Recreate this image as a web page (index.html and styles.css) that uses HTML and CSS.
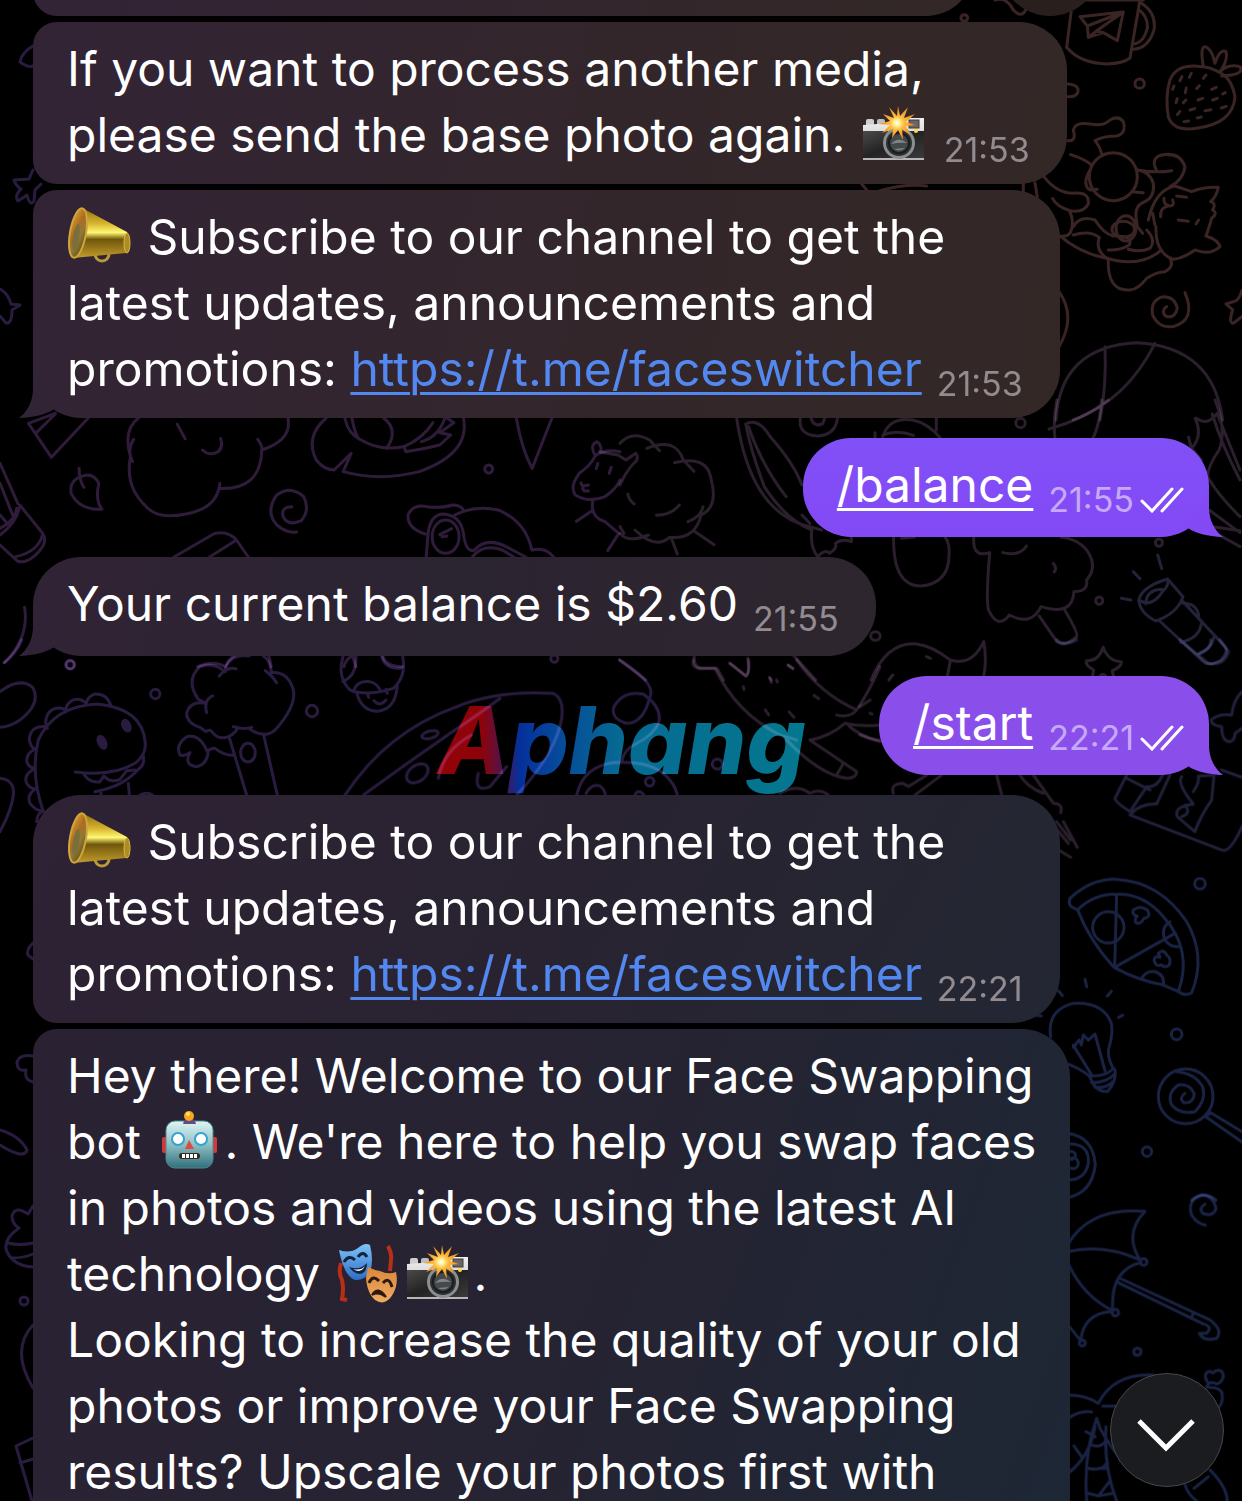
FILE: index.html
```html
<!DOCTYPE html>
<html lang="en">
<head>
<meta charset="utf-8">
<meta name="viewport" content="width=device-width, initial-scale=1">
<title>Face Switcher</title>
<link rel="stylesheet" href="styles.css">
</head>
<body>

<!-- shared shapes -->
<svg class="defs" aria-hidden="true">
  <defs>
    <linearGradient id="gold" x1="0" y1="0" x2="0" y2="1">
      <stop offset="0" stop-color="#8f7216"/><stop offset=".3" stop-color="#d9b52f"/><stop offset=".48" stop-color="#fff873"/><stop offset=".62" stop-color="#70560b"/><stop offset="1" stop-color="#c29c2c"/>
    </linearGradient>
    <linearGradient id="bell" x1="0" y1="0" x2="1" y2="1">
      <stop offset="0" stop-color="#d6ae38"/><stop offset=".4" stop-color="#b06b20"/><stop offset=".6" stop-color="#8f7a38"/><stop offset="1" stop-color="#59440e"/>
    </linearGradient>
    <linearGradient id="steel" x1="0" y1="0" x2="0" y2="1">
      <stop offset="0" stop-color="#f1f1f1"/><stop offset="1" stop-color="#b5b5b5"/>
    </linearGradient>
    <linearGradient id="leather" x1="0" y1="0" x2="1" y2="1">
      <stop offset="0" stop-color="#4a4a4a"/><stop offset=".5" stop-color="#232323"/><stop offset="1" stop-color="#3b3b3b"/>
    </linearGradient>
    <linearGradient id="tin" x1="0" y1="0" x2="0" y2="1">
      <stop offset="0" stop-color="#dff6f4"/><stop offset=".5" stop-color="#8fbfc4"/><stop offset="1" stop-color="#32707c"/>
    </linearGradient>
    <linearGradient id="joy" x1="0" y1="0" x2="0" y2="1">
      <stop offset="0" stop-color="#7ec4fb"/><stop offset="1" stop-color="#2b6cc4"/>
    </linearGradient>
    <linearGradient id="sorrow" x1="0" y1="0" x2="0" y2="1">
      <stop offset="0" stop-color="#d9873a"/><stop offset="1" stop-color="#f0ab62"/>
    </linearGradient>
    <radialGradient id="flash">
      <stop offset="0" stop-color="#fff"/><stop offset=".15" stop-color="#fff3a0"/><stop offset=".4" stop-color="#fdbb3c"/><stop offset="1" stop-color="#f08a1c"/>
    </radialGradient>
    <linearGradient id="brand" gradientUnits="userSpaceOnUse" x1="438" y1="0" x2="806" y2="0">
      <stop offset="0" stop-color="#930306"/><stop offset=".12" stop-color="#8e0309"/><stop offset=".18" stop-color="#4b1552"/><stop offset=".22" stop-color="#05309a"/><stop offset=".34" stop-color="#064c9a"/><stop offset=".5" stop-color="#066b92"/><stop offset="1" stop-color="#04788f"/>
    </linearGradient>

    <symbol id="horn" viewBox="0 0 64 60" overflow="visible">
      <circle cx="35" cy="46" r="7" fill="none" stroke="#bb9a3c" stroke-width="3"/>
      <path d="M17 1 L60 24 Q64 34 59 45 L6 50 Z" fill="url(#gold)"/>
      <ellipse cx="11" cy="25" rx="8" ry="25" transform="rotate(10 11 25)" fill="url(#bell)" stroke="#d0a63a" stroke-width="2"/>
      <ellipse cx="9" cy="29" rx="3" ry="13" transform="rotate(10 9 29)" fill="#77703c"/>
      <ellipse cx="60" cy="35" rx="3" ry="10" fill="#ad8c26" stroke="#d8b645" stroke-width="1"/>
    </symbol>

    <symbol id="camera" viewBox="0 0 64 60" overflow="visible">
      <rect x="4" y="13" width="8" height="8" rx="2" fill="#cfcfcf"/>
      <rect x="15" y="13" width="8" height="8" rx="2" fill="#bdbdbd"/>
      <path d="M1 19 L29 17 L30 12 H62 V54 H1 Z" fill="url(#steel)"/>
      <rect x="1" y="25" width="61" height="27" fill="url(#leather)"/>
      <rect x="47" y="14" width="10" height="8" fill="#6e6465" stroke="#403b3b"/>
      <circle cx="37" cy="37" r="16" fill="#8b8f90"/>
      <circle cx="37" cy="37" r="13" fill="#2d3032"/>
      <circle cx="37" cy="37" r="10" fill="#44494b" stroke="#1b1d1e" stroke-width="2"/>
      <path d="M29 38 Q36 30 45 37 Q38 36 29 38 M32 43 Q38 46 43 42" fill="#7e8587"/>
      <path d="M36 0 L38 10 L46 1 L42 12 L53 8 L44 16 L53 19 L44 20 L48 29 L40 23 L41 34 L36 24 L30 32 L31 23 L20 27 L28 19 L17 18 L28 15 L21 8 L32 12 L27 1 L35 10 Z" fill="url(#flash)"/>
      <circle cx="54" cy="25" r="2" fill="#ffd83a"/>
    </symbol>

    <symbol id="robot" viewBox="0 0 64 60" overflow="visible">
      <rect x="5" y="24" width="5" height="16" rx="2" fill="#d7363c"/>
      <rect x="55" y="24" width="5" height="16" rx="2" fill="#d7363c"/>
      <rect x="9" y="8" width="47" height="47" rx="9" fill="url(#tin)" stroke="#4c8992" stroke-width="1"/>
      <path d="M26 11 Q27 5 32 5 Q38 5 39 11 Z" fill="#634c86"/>
      <circle cx="32" cy="3" r="5" fill="#f9a51c"/><circle cx="31" cy="1" r="2" fill="#ffe379"/>
      <circle cx="21" cy="26" r="6" fill="#fff" stroke="#2ea3d6" stroke-width="2"/>
      <circle cx="44" cy="26" r="6" fill="#fff" stroke="#2ea3d6" stroke-width="2"/>
      <path d="M32 27 L37 36 H28 Z" fill="#dc4b47"/>
      <rect x="22" y="40" width="21" height="6" rx="3" fill="#33291f"/>
      <path d="M25 43 H40" stroke="#fff" stroke-width="4" stroke-dasharray="3 1"/>
    </symbol>

    <symbol id="masks" viewBox="0 0 64 60" overflow="visible">
      <path d="M5 18 Q2 28 6 35 Q8 44 6 54 L11 55 M52 1 Q56 9 55 15 L54 26" fill="none" stroke="#b92e14" stroke-width="4"/>
      <path d="M3 5 Q14 9 22 3 Q29 -3 34 0 Q38 16 34 27 Q28 36 19 35 Q8 31 3 5 Z" fill="url(#joy)"/>
      <path d="M8 17 Q13 9 19 15 M22 12 Q27 5 31 12" fill="none" stroke="#12243b" stroke-width="3"/>
      <path d="M13 22 Q24 26 31 18 Q31 28 24 29 Q18 29 13 22 Z" fill="#12243b"/>
      <path d="M17 24 Q25 26 29 21 Q25 29 17 24 Z" fill="#fff"/>
      <path d="M32 22 Q38 25 44 26 Q52 30 60 27 Q63 41 55 52 Q48 61 39 55 Q31 48 30 33 Z" fill="url(#sorrow)"/>
      <path d="M33 38 Q37 29 43 36 M47 38 Q53 31 56 42" fill="none" stroke="#2c1a10" stroke-width="3"/>
      <path d="M36 50 Q42 40 50 52 Q42 46 36 50 Z" fill="#2c1a10" stroke="#2c1a10" stroke-width="2"/>
    </symbol>

    <symbol id="tail" viewBox="0 0 62 48">
      <path d="M14 0 V20 Q13 38 0 48 Q24 47 35 39 Z"/>
    </symbol>
    <symbol id="read" viewBox="0 0 44 26">
      <path d="M2 14 L12 24 L32 2 M22 24 L42 2"/>
    </symbol>
  </defs>
</svg>

<main class="chat">

  <!-- doodle wallpaper -->
  <svg class="wallpaper" viewBox="0 0 1242 1501" preserveAspectRatio="xMidYMin slice" aria-hidden="true">
    <text class="brand" x="438" y="774">Aphang</text>

    <!-- mug, strawberry, breakfast, cat -->
    <g class="rust" transform="translate(840 0) scale(.3333)">
      <path d="M690 0 H910 M698 0 L680 142 Q720 190 800 192 Q850 190 870 174 L900 0 M905 10 Q950 40 942 90 Q925 145 880 148 M895 28 Q925 50 922 85 Q912 125 885 132"/>
      <path d="M720 50 L850 36 L832 122 L790 98 L745 112 L742 78 Z M850 36 L742 78 M850 36 L768 94 L790 98 M768 94 L745 112"/>
      <circle cx="899" cy="251" r="14"/><circle cx="373" cy="54" r="10"/>
      <path d="M465 0 Q500 -10 520 30 Q545 55 557 30 M684 252 Q720 255 713 278 Q705 292 684 290"/>
      <path d="M1085 200 Q1010 190 990 240 Q975 290 985 350 Q1000 395 1070 385 Q1180 370 1185 290 Q1175 235 1140 218 Q1110 200 1085 200"/>
      <path d="M1090 198 Q1080 140 1095 140 Q1115 145 1125 190 Q1140 145 1158 155 Q1165 180 1140 215 Q1165 190 1200 200 Q1215 225 1145 228"/>
      <path d="M1020 242 l6 -12 M1048 232 l6 -12 M1090 235 l8 -10 M1070 266 l8 -9 M1115 268 l14 -6 M1036 278 l3 -14 M998 268 l4 -10 M1008 308 l4 -12 M1030 308 l8 -8 M1074 300 l14 -5 M1118 300 l14 -5 M1050 330 l14 -4 M1012 344 l8 -10 M1095 332 l18 -3 M1144 324 l14 -5 M1148 282 l8 -4 M1072 354 l12 -3 M1032 365 l14 -2"/>
      <circle cx="820" cy="530" r="72"/>
      <path d="M684 422 Q710 425 700 390 Q705 365 750 372 Q790 380 810 360 Q835 345 850 365 Q860 400 830 408 Q790 408 765 422 Q780 440 785 462 M692 464 Q730 475 755 495 M750 510 Q725 555 750 570 L772 568"/>
      <path d="M612 530 Q650 580 700 580 Q750 575 745 612 Q730 640 690 632 Q650 620 638 596 M690 636 Q705 670 690 700 Q680 712 660 708 Q720 760 800 775 Q900 805 965 750"/>
      <path d="M700 680 Q720 645 765 660 Q790 700 820 708 Q880 705 868 735 Q840 752 805 750 M700 705 Q750 690 778 712 Q765 750 800 775 M920 690 Q950 720 930 745 Q900 758 865 748"/>
      <ellipse cx="858" cy="685" rx="30" ry="38"/><ellipse cx="850" cy="688" rx="34" ry="24"/>
      <path d="M892 510 Q930 515 940 550 Q945 590 915 605 Q885 615 888 650 L892 680 L908 700 M890 510 Q945 520 995 512 M875 575 L910 578 M950 512 Q930 475 965 465 Q1020 455 1035 500 Q1030 540 990 560"/>
      <path d="M925 660 Q945 570 1005 558 L1055 575 Q1090 560 1135 562 Q1130 590 1112 605 Q1130 610 1118 630 Q1135 640 1115 655 Q1105 690 1098 708 Q1135 720 1140 740 Q1110 768 1065 750 Q1030 775 1000 778 Q945 760 948 680 M945 675 L938 640"/>
      <path d="M972 595 Q970 615 990 618 Q1005 618 998 600 M962 650 Q960 625 980 620 M1010 588 L1040 592 M1015 660 L1045 664 M1068 672 l8 -12"/>
      <path d="M805 775 Q800 875 870 870 Q895 868 920 835 Q950 815 975 815 Q1005 800 990 775"/>
      <path d="M980 920 Q960 935 980 950 Q1005 955 1012 925 Q1005 890 970 890 Q930 900 938 945 Q955 985 1000 980 Q1070 960 1035 878"/>
      <path d="M1206 872 Q1195 905 1180 905 L1158 912 L1178 930 Q1165 970 1180 970 L1206 950 M657 875 Q710 950 657 1040"/>
      <path class="mauve" d="M648 1260 Q660 1040 890 1028 Q1120 1040 1148 1260 M795 1040 Q800 1160 780 1260 M945 1030 Q860 1200 700 1260"/>
      <path d="M550 548 V575 M585 548 L592 590 M65 552 L82 572 M120 572 Q200 550 260 558"/>
    </g>

    <!-- party hat, cloud, duck ring, cap, paint tube -->
    <g class="plum" transform="translate(0 400) scale(.3954 .3333)">
      <path d="M140 40 L72 70 L130 172 L225 52 M92 98 L140 42"/>
      <path d="M350 54 Q310 90 330 170 Q315 260 370 320 Q400 360 470 342 Q550 325 556 250 M556 265 Q660 270 662 150 M652 118 Q665 140 662 150 Q740 120 728 54 M338 118 Q320 150 335 184 M448 72 L468 116 M512 150 Q530 170 552 155 Q565 140 558 116"/>
      <path d="M200 205 Q200 240 212 262 M205 230 Q175 240 180 280 Q200 330 258 328 Q240 300 250 250 Q235 215 205 230"/>
      <path d="M738 320 Q710 320 716 350 Q730 380 762 362 Q785 330 768 290 Q735 255 700 285 Q670 335 700 375 Q725 400 750 396"/>
      <path d="M0 190 L45 310 M0 250 L32 345 M0 345 L18 370 M0 405 Q45 365 50 315 L108 400 Q125 430 85 470 Q65 490 45 484 L0 435 M0 385 Q40 360 42 325 M108 402 Q98 455 40 470"/>
      <path d="M825 54 Q770 110 800 180 Q820 210 845 210 L888 160 L868 215 Q960 245 1060 215 Q1190 160 1172 54 M872 54 Q880 100 910 118 Q960 155 1020 140 M890 54 Q895 90 905 112 M970 54 Q1010 90 978 145 M1022 140 L1026 155 Q1070 148 1112 135 L1140 105 L1112 98 L1148 68 L1130 54 M1066 125 Q1110 110 1125 54 M1095 68 Q1070 115 1022 140"/>
      <path d="M1306 54 Q1320 150 1346 205 L1396 54"/>
      <ellipse cx="1236" cy="207" rx="10" ry="12"/><ellipse cx="178" cy="794" rx="10" ry="12"/><ellipse cx="1402" cy="776" rx="9" ry="11"/>
      <path d="M440 471 L540 402 Q575 390 598 420 L628 471 M598 420 L530 471"/>
      <path d="M1075 402 Q1030 385 1032 345 Q1045 310 1080 320 Q1120 325 1145 315 Q1165 315 1172 330 M1078 471 L1082 410 Q1085 345 1120 342 Q1165 345 1172 400 Q1178 460 1200 450 Q1230 410 1280 440 L1330 471 M1150 345 Q1200 315 1260 330 Q1330 365 1345 450 Q1380 440 1400 471 M1195 471 Q1220 430 1270 450 L1300 471"/>
      <ellipse cx="1127" cy="410" rx="34" ry="50"/><path d="M1112 404 L1142 386 M1118 410 L1130 408"/>
      <path d="M1505 165 Q1490 135 1510 125 Q1522 135 1520 155 M1568 155 Q1530 145 1505 168 Q1495 195 1465 220 Q1440 260 1455 285 Q1490 310 1530 290 Q1560 265 1568 240 M1500 300 Q1490 350 1530 365 L1565 400 L1537 452 M1500 330 L1458 364 M1512 190 l-4 16 M1546 202 l-5 18 M1470 248 Q1468 262 1488 255 M1475 260 Q1470 275 1488 273"/>
      <path d="M62 622 Q75 710 12 788 M500 800 Q540 780 570 800 Q590 760 630 768 M680 768 L686 800 M870 800 Q875 775 892 768 L900 800 M968 768 Q975 800 1018 800"/>
    </g>

    <!-- sheep, racket, popsicle, torch -->
    <g class="mauve" transform="translate(620 400) scale(.3954 .3333)">
      <path d="M-52 155 Q-30 160 -5 165 L15 180 L40 160 Q50 175 35 190 Q15 215 0 255 M0 130 Q30 90 75 120 L100 152 M68 145 Q140 110 160 180 L187 214 M138 188 Q220 165 230 235 Q250 320 205 345 M210 320 Q205 350 172 365 M205 345 Q190 420 125 412 Q90 450 38 390 M72 405 Q20 430 0 400 M0 380 L10 400 M130 415 L145 462 M190 395 L238 434 M20 282 Q22 300 36 312 M92 346 Q130 345 150 315"/>
      <path d="M295 54 Q330 340 480 380 L510 390 M318 72 Q350 52 380 110 Q440 190 460 255 M325 80 Q360 200 420 290 M318 72 Q330 150 365 260 Q420 360 485 390 Q480 440 500 470 M460 345 L480 370 M500 470 Q520 445 530 460 Q550 445 545 430 Q560 415 585 425 V410"/>
      <path d="M456 54 Q450 105 500 108 Q545 105 550 54 M483 54 Q490 82 512 72 L518 54 M665 110 Q680 50 740 60 Q780 70 810 114 M665 105 Q700 88 742 106 M645 115 V98 M800 54 V90"/>
      <ellipse cx="1013" cy="69" rx="12" ry="14"/><ellipse cx="1212" cy="602" rx="9" ry="11"/><ellipse cx="646" cy="708" rx="12" ry="13"/><ellipse cx="1363" cy="428" rx="9" ry="11"/>
      <path d="M1105 0 Q1095 60 1100 114 M1218 0 Q1212 80 1196 114 M1085 87 Q1170 60 1235 0"/>
      <path d="M692 411 Q690 560 762 558 Q830 550 832 470 Q835 430 822 411 M712 415 L745 411"/>
      <path d="M895 411 Q890 475 935 458 Q925 600 932 630 Q955 690 985 645 Q1040 680 1065 620 Q1145 650 1148 575 Q1185 575 1180 540 Q1210 500 1180 450 Q1160 418 1115 411 M968 458 Q1010 470 1028 438 M1096 490 Q1106 505 1098 516 M1060 648 L1105 725 Q1125 742 1155 710 Q1160 700 1122 625"/>
      <path class="navy-soft" d="M1312 600 Q1320 560 1385 537 L1424 590 Q1410 640 1355 663 Q1315 640 1312 600 Q1345 625 1372 575 Q1390 555 1385 537 M1330 612 Q1330 570 1370 568 M1424 610 Q1460 610 1464 650 M1365 663 L1475 785 Q1490 800 1520 780 Q1540 755 1530 740 L1424 605 M1418 727 Q1465 715 1470 672 M1460 764 Q1495 750 1502 712 M1360 465 L1370 506 M1298 515 L1315 536 M1268 595 L1292 600"/>
      <path d="M1505 0 Q1535 90 1515 150 Q1480 210 1488 240 M1458 55 Q1485 80 1510 40 L1568 210 M1455 55 Q1475 110 1445 145 L1438 112 M1445 145 L1470 180 M1498 42 Q1520 130 1568 240 M1480 215 Q1500 270 1568 350 M1490 330 L1568 398 M1500 380 L1568 392 M1520 408 L1568 440"/>
      <path d="M188 768 Q185 800 205 805 L245 805 L262 840 M278 790 L318 828 Q328 820 323 775 M425 796 l12 10 M440 768 L495 840 M0 780 L65 840 M775 770 l10 5 M378 832 l5 8"/>
      <path d="M635 840 Q675 725 750 732 Q790 738 835 780 Q890 800 920 725 Q928 780 920 828 M835 785 L828 828 M680 840 L690 825"/>
      <path d="M1222 742 Q1210 785 1180 782 Q1175 795 1198 810 L1195 828 M1222 742 Q1235 785 1268 785 Q1270 800 1245 812 L1248 828 M1214 828 Q1222 818 1228 828"/>
    </g>

    <!-- dinosaur, tree, mushroom, surfboard -->
    <g class="violet" transform="translate(0 640) scale(.3333)">
      <circle cx="210" cy="74" r="13"/><circle cx="466" cy="162" r="14"/><circle cx="936" cy="213" r="17"/>
      <path d="M0 155 Q60 110 98 142 Q125 190 60 240 Q30 260 0 262 M0 415 Q45 420 40 465 Q35 510 0 575 M65 0 Q50 40 12 68"/>
      <path d="M130 515 Q90 400 115 300 Q160 200 290 192 Q430 205 436 310 Q438 345 405 370 Q340 410 226 396 M430 348 Q435 375 415 388 Q370 440 285 455 M385 430 L388 465 M303 460 V466"/>
      <path d="M332 195 Q320 160 285 162 Q260 170 258 195 M258 190 Q240 170 215 182 Q195 195 198 215 M195 208 Q160 195 142 225 Q132 250 142 265 M140 260 Q90 255 88 300 Q95 330 108 325 M100 330 Q75 345 82 370 Q90 385 105 383 M100 388 Q70 405 80 430 Q95 450 108 445 M105 448 Q80 465 90 490 Q110 515 130 512 Q112 520 110 545"/>
      <path d="M252 403 Q270 430 300 425 L312 408 Q330 430 360 418 L380 392 L405 390 M420 465 Q440 455 458 465"/>
      <ellipse class="dot" cx="306" cy="307" rx="10" ry="19" transform="rotate(-25 306 307)"/><ellipse class="dot" cx="379" cy="257" rx="10" ry="17" transform="rotate(-25 379 257)"/>
      <path d="M658 108 Q680 80 708 86 M675 95 Q640 65 600 80 Q555 120 595 178 L618 190 M638 168 Q610 180 620 218 M618 190 Q570 180 560 220 Q560 250 600 262 M600 262 L618 275 Q630 265 638 278 Q660 305 695 285 Q725 260 700 260 Q730 270 755 262 M750 268 Q800 300 830 265 Q890 195 880 150 Q865 95 815 98 Q810 60 790 48 M796 92 Q815 105 830 128 M675 92 Q680 60 702 48"/>
      <path d="M687 290 L740 465 M791 285 L832 465 M698 346 Q670 345 645 325 Q630 325 622 335 Q600 280 560 290 Q525 315 540 345 Q555 350 570 338 Q550 375 590 380 Q620 375 625 335"/>
      <ellipse cx="744" cy="338" rx="22" ry="28"/>
      <path d="M1030 48 Q1010 110 1050 150 Q1100 170 1180 145 Q1220 110 1208 48 M1068 48 Q1070 110 1028 124 M1145 48 Q1155 90 1205 84 M1060 155 Q1070 120 1110 125 Q1130 130 1142 152 M1070 158 Q1085 215 1135 214 Q1190 205 1192 132 M1122 182 Q1140 202 1158 180 M1102 160 l4 12 M1158 148 l4 12"/>
    </g>
    <g class="violet" transform="translate(420 660) scale(.3333)">
      <path d="M-225 405 Q-100 215 110 140 Q230 90 400 100 Q440 120 420 200 Q390 300 290 405 M-170 405 Q-40 310 90 220 Q180 160 240 115 M55 355 Q70 270 155 225 M175 340 Q160 400 210 380 L260 320"/>
      <ellipse cx="30" cy="224" rx="25" ry="11" transform="rotate(-15 30 224)"/><ellipse cx="-8" cy="340" rx="36" ry="24" transform="rotate(-35 -8 340)"/>
      <path d="M598 0 Q710 70 690 110 Q670 190 620 190 Q570 175 582 140 Q610 90 670 102 Q730 145 715 190 Q700 225 650 250 Q610 270 605 305 M470 405 Q490 320 580 308 Q680 300 730 340 Q765 370 772 405 M498 400 Q515 370 540 378 Q555 390 556 405 M645 405 Q655 385 672 405"/>
      <circle cx="689" cy="365" r="13"/><circle cx="892" cy="312" r="15"/>
      <path class="mauve" d="M820 0 Q815 20 835 25 L885 25 Q950 160 1080 225 L1130 240 M930 10 L978 48 Q990 40 986 0 M1130 0 Q1200 100 1310 150 Q1290 175 1250 165 M1380 20 Q1350 90 1310 150 M1170 240 Q1230 230 1275 190 Q1320 200 1380 195 M1170 240 L1310 335 Q1310 355 1280 355 Q1200 345 1100 240 M1280 190 Q1310 225 1380 245 M1270 310 L1250 345 M1105 15 l14 10 M1182 106 l14 10 M1108 156 l14 16 M1036 150 l10 14 M1050 55 l4 12 M1070 60 l2 6 M970 80 l2 8 M1080 400 Q1130 370 1170 400 Q1200 385 1225 405"/>
    </g>
    <g class="slate" transform="translate(860 640) scale(.3333)">
      <path class="mauve" d="M245 405 L165 465 M100 460 Q90 430 130 430 L145 440 L200 405 M410 405 L425 465 M480 405 Q500 440 550 460 M520 405 L580 490 Q610 490 602 518 M590 545 L632 600 M610 545 L652 622 M580 555 L625 610 M588 625 L632 652 M0 200 L30 180 M30 220 l6 2 M0 285 Q40 300 58 300"/>
      <path d="M590 0 Q610 20 650 0 M960 0 L1045 70 Q1090 80 1106 35 L1080 0 M1020 38 Q1055 25 1052 0"/>
      <path d="M1146 155 Q1120 180 1115 225 Q1080 220 1055 238 Q1050 255 1085 260 Q1085 300 1105 305 Q1125 305 1125 280 L1146 265"/>
      <path d="M800 405 L765 475 Q765 485 810 515 L860 440 Q890 445 908 405 M800 415 L870 450 M810 525 L1085 630 Q1110 640 1146 560 M810 525 Q840 490 890 492 L930 405 M965 410 Q950 430 1000 492 Q940 500 952 530 L1005 575 Q1020 530 1055 480 L1062 405 M1000 455 Q1020 425 1015 408 L1062 405 M975 495 Q995 520 965 530 M1085 390 L1146 412"/>
    </g>

    <!-- pizza, bulb, lollipop -->
    <g class="navy" transform="translate(1020 860) scale(.3333)">
      <path d="M150 115 Q215 55 290 58 Q420 65 500 185 Q560 290 515 398 Q495 410 475 395 L430 375 Q350 360 282 322 Q210 245 172 148 Q140 140 150 115 M172 150 Q225 100 290 103 Q370 100 430 170 Q520 270 475 395 M290 103 L284 322 L465 220 M365 355 Q380 330 405 335 Q435 345 430 375 M450 185 Q420 205 435 240 Q450 262 480 260"/>
      <circle cx="265" cy="202" r="47"/><circle cx="540" cy="71" r="16"/><circle cx="470" cy="523" r="16"/><circle cx="381" cy="875" r="14"/>
      <path d="M340 150 Q360 135 382 150 Q395 170 372 175 Q360 195 348 188 Q342 178 352 168 Q335 165 340 150 M415 280 Q430 265 440 285 Q455 295 448 315 Q435 325 425 315 Q405 320 402 300 Q405 285 420 292 L415 280"/>
      <path d="M92 530 Q80 450 160 430 Q250 425 274 490 Q280 520 265 570 Q265 610 285 630 Q290 665 262 695 Q235 695 220 672 L208 648 Q180 625 144 612 M160 556 L215 645 M160 562 L178 540 L184 555 L190 525 L205 540 L225 522 L255 632 M208 648 Q260 650 280 625 M215 668 Q260 668 286 640 M225 682 Q260 685 278 665 M195 358 l5 22 M115 392 l12 14 M262 408 l12 -14 M296 472 l12 -6 M50 466 l14 2"/>
      <circle cx="497" cy="709" r="82"/>
      <path d="M495 700 Q475 715 492 728 Q520 730 523 702 Q510 670 475 675 Q440 700 455 735 Q480 765 525 755 Q560 720 548 680 Q525 640 470 635 M557 770 L666 846 M572 758 L666 815 M557 770 L572 758"/>
      <path d="M144 820 Q220 830 226 915 Q215 1000 144 1012 M144 852 Q210 850 205 910 Q195 960 144 960 M515 1020 Q550 990 588 1020"/>
      <circle cx="154" cy="886" r="12"/><circle cx="159" cy="910" r="16"/>
    </g>

    <!-- umbrella, palm, cactus -->
    <g class="navy" transform="translate(1020 1180) scale(.3333)">
      <path d="M144 192 Q210 80 375 94 Q310 160 360 240 Q250 190 144 215 M144 250 Q190 350 278 392 Q270 270 362 248 M144 435 L182 482 Q190 400 275 395 M300 295 L570 420 Q610 450 590 475 Q550 485 538 460 L560 460 Q580 440 550 432 L295 308 M520 400 L515 412"/>
      <circle cx="371" cy="246" r="10"/><circle cx="286" cy="398" r="10"/><circle cx="187" cy="489" r="9"/><circle cx="352" cy="515" r="11"/>
      <path d="M555 72 Q535 85 548 100 Q580 112 588 85 Q580 45 545 46 Q500 60 515 105 Q530 130 556 135"/>
      <path d="M144 645 Q200 645 235 670 Q280 580 400 585 M144 715 Q180 690 215 696 M248 678 H290 M230 715 Q190 820 200 963 M230 715 L240 745 Q300 850 350 880 M258 740 Q250 860 290 963 M144 880 Q210 830 225 740 M198 755 L225 770 M162 798 L185 830 M215 795 Q240 805 255 785 M205 865 Q250 875 262 845 M205 940 L235 948 L268 905 M235 948 L278 940 M235 865 H262"/>
      <path d="M565 610 Q545 580 570 573 Q580 585 585 573 Q610 565 610 590 Q605 608 590 612 Q570 600 560 620 M560 622 Q600 620 606 640 Q610 665 598 680 M495 915 Q505 945 530 963 M522 925 L565 890 M570 870 Q620 920 622 963"/>
    </g>

    <!-- left margin -->
    <g class="violet">
      <path d="M33 170 L29 179 L14 180 Q16 186 21 189 Q14 196 18 201 L27 195 Q30 207 34 201 L35 190 L41 184 M0 289 Q8 293 11 304 L20 305 L12 310 Q12 324 6 323 L0 316 M33 46 Q22 52 20 62 Q28 68 33 66"/>
      <path d="M33 943 Q26 950 28 955 L33 959 M33 1056 Q20 1054 17 1062 Q17 1072 26 1070 Q24 1080 33 1082 M0 1130 Q20 1136 27 1150 Q24 1160 0 1145 M33 1206 L28 1214 Q15 1205 12 1216 Q12 1224 19 1228 Q2 1240 7 1252 Q14 1266 33 1267 M8 1243 Q20 1246 33 1243 M12 1258 Q24 1258 33 1254 M33 1325 Q10 1350 33 1388 M33 1438 L16 1446 L32 1501 M20 1463 L33 1459"/>
      <circle cx="24" cy="1301" r="4"/>
    </g>
  </svg>

  <div class="peek">
    <div class="bubble-end"></div>
    <div class="share-end"></div>
  </div>

  <article class="msg in warm join-top join-bottom">
    <p>If you want to process another media,<br>
    please send the base photo again. <svg class="emoji" role="img" aria-label="camera with flash"><use href="#camera"/></svg><time>21:53</time></p>
  </article>

  <article class="msg in warm join-top">
    <p><svg class="emoji lead" role="img" aria-label="megaphone"><use href="#horn"/></svg> Subscribe to our channel to get the<br>
    latest updates, announcements and<br>
    promotions: <a href="https://t.me/faceswitcher">https://t.me/faceswitcher</a><time>21:53</time></p>
    <svg class="tail"><use href="#tail"/></svg>
  </article>

  <article class="msg out first">
    <p><a href="#balance">/balance</a><time>21:55</time><svg class="read" role="img" aria-label="read"><use href="#read"/></svg></p>
    <svg class="tail"><use href="#tail"/></svg>
  </article>

  <article class="msg in dusk first">
    <p>Your current balance is $2.60<time>21:55</time></p>
    <svg class="tail"><use href="#tail"/></svg>
  </article>

  <article class="msg out late first">
    <p><a href="#start">/start</a><time>22:21</time><svg class="read" role="img" aria-label="read"><use href="#read"/></svg></p>
    <svg class="tail"><use href="#tail"/></svg>
  </article>

  <article class="msg in cool first join-bottom">
    <p><svg class="emoji lead" role="img" aria-label="megaphone"><use href="#horn"/></svg> Subscribe to our channel to get the<br>
    latest updates, announcements and<br>
    promotions: <a href="https://t.me/faceswitcher">https://t.me/faceswitcher</a><time>22:21</time></p>
  </article>

  <article class="msg in deep join-top">
    <p>Hey there! Welcome to our Face Swapping<br>
    bot <svg class="emoji" role="img" aria-label="robot"><use href="#robot"/></svg>. We're here to help you swap faces<br>
    in photos and videos using the latest AI<br>
    technology <svg class="emoji" role="img" aria-label="theatre masks"><use href="#masks"/></svg><svg class="emoji" role="img" aria-label="camera with flash"><use href="#camera"/></svg>.<br>
    Looking to increase the quality of your old<br>
    photos or improve your Face Swapping<br>
    results? Upscale your photos first with</p>
  </article>

  <button class="to-bottom" type="button" aria-label="Scroll to bottom">
    <svg viewBox="0 0 60 36"><path d="M2 5 L29 32 L56 5"/></svg>
  </button>
</main>

</body>
</html>
```
FILE: styles.css
```css
* {
  box-sizing: border-box;
}

body {
  margin: 0;
  background: #000;
  color: #fff;
  font-family: Inter, "Liberation Sans", sans-serif;
  font-size: 48px;
  line-height: 66px;
}

.defs {
  position: absolute;
  width: 0;
  height: 0;
}

.chat {
  position: relative;
  height: 100vh;
  overflow: hidden;
  padding: 0 33px;
  display: flex;
  flex-direction: column;
  align-items: flex-start;
}

/* Wallpaper */
.wallpaper {
  position: absolute;
  top: 0;
  left: 0;
  width: 100%;
  height: 100%;
}

.wallpaper g {
  mix-blend-mode: screen;
}

.wallpaper path,
.wallpaper circle,
.wallpaper ellipse {
  fill: none;
  stroke: currentColor;
  stroke-width: 3px;
  stroke-linecap: round;
  stroke-linejoin: round;
  vector-effect: non-scaling-stroke;
}

.wallpaper .dot {
  fill: currentColor;
}

.wallpaper .rust { color: #3a2524; }
.wallpaper .plum { color: #2f1c3b; }
.wallpaper .mauve { color: #2b1f2d; }
.wallpaper .violet { color: #2a1c40; }
.wallpaper .slate { color: #20213a; }
.wallpaper .navy-soft { color: #222238; }
.wallpaper .navy { color: #1a2344; }

.brand {
  fill: url(#brand);
  font-size: 93px;
  font-style: italic;
  font-weight: 800;
}

/* Bottom edge of the message above */
.peek {
  position: relative;
  flex: none;
  display: flex;
  gap: 25px;
  width: 100%;
  height: 16px;
  align-items: flex-end;
}

.bubble-end {
  flex: none;
  width: 80%;
  height: 96px;
  border-radius: 24px 48px 48px 24px;
  background: linear-gradient(90deg, #322336, #332826);
}

.share-end {
  flex: none;
  width: 102px;
  height: 102px;
  border-radius: 50%;
  background: #29201d;
}

/* Messages */
.msg {
  position: relative;
  flex: none;
  min-height: 99px;
  margin-top: 6px;
  padding: 14px 37px 16px 34px;
  border-radius: 48px;
  white-space: nowrap;
}

.msg p {
  margin: 0;
}

.msg.first {
  margin-top: 20px;
}

.warm {
  fill: #312435;
  background: linear-gradient(100deg, #322435 0%, #33262b 55%, #332826 100%);
}

.dusk {
  fill: #302335;
  background: linear-gradient(100deg, #302335, #2b2431 50%, #2e262e);
}

.cool {
  background: linear-gradient(120deg, #2e2234, #292331 50%, #232733);
}

/* runs on below the window */
.deep {
  padding-right: 34px;
  padding-bottom: 82px;
  background: linear-gradient(110deg, #2a2233, #262332 50%, #1d2735);
}

.out {
  align-self: flex-end;
  padding-right: 25px;
  fill: #8349f5;
  background: linear-gradient(#8150f7, #8349f5);
}

.out.late {
  fill: #8a4eea;
  background: #8a4eea;
}

.join-top {
  border-top-left-radius: 24px;
}

.join-bottom {
  border-bottom-left-radius: 24px;
}

.msg a {
  color: #5288f0;
  text-decoration: underline;
  text-decoration-thickness: 3px;
  text-underline-offset: 6px;
}

.out a {
  color: #fff;
}

.msg time {
  margin-left: 15px;
  font-size: 34px;
  line-height: 1px;
  vertical-align: -10px;
  color: #928b90;
}

.out time {
  color: #c6a9fa;
}

.emoji {
  width: 64px;
  height: 60px;
  margin: 0 3px;
  vertical-align: -14px;
  overflow: visible;
}

.emoji.lead {
  margin-left: 0;
}

.read {
  width: 44px;
  height: 26px;
  margin-left: 6px;
  vertical-align: -11px;
  fill: none;
  stroke: #fff;
  stroke-width: 3px;
  stroke-linecap: round;
}

.tail {
  position: absolute;
  bottom: 0;
  left: -14px;
  width: 62px;
  height: 48px;
}

.out .tail {
  left: auto;
  right: -14px;
  transform: scaleX(-1);
}

/* Scroll button */
.to-bottom {
  position: absolute;
  right: 18px;
  bottom: 14px;
  width: 114px;
  height: 114px;
  padding: 0;
  border: 1px solid #47474a;
  border-radius: 50%;
  background: #1b1c20;
  cursor: pointer;
}

.to-bottom svg {
  display: block;
  width: 60px;
  height: 36px;
  margin: 8px auto 0;
  fill: none;
  stroke: #fff;
  stroke-width: 5px;
}
```
